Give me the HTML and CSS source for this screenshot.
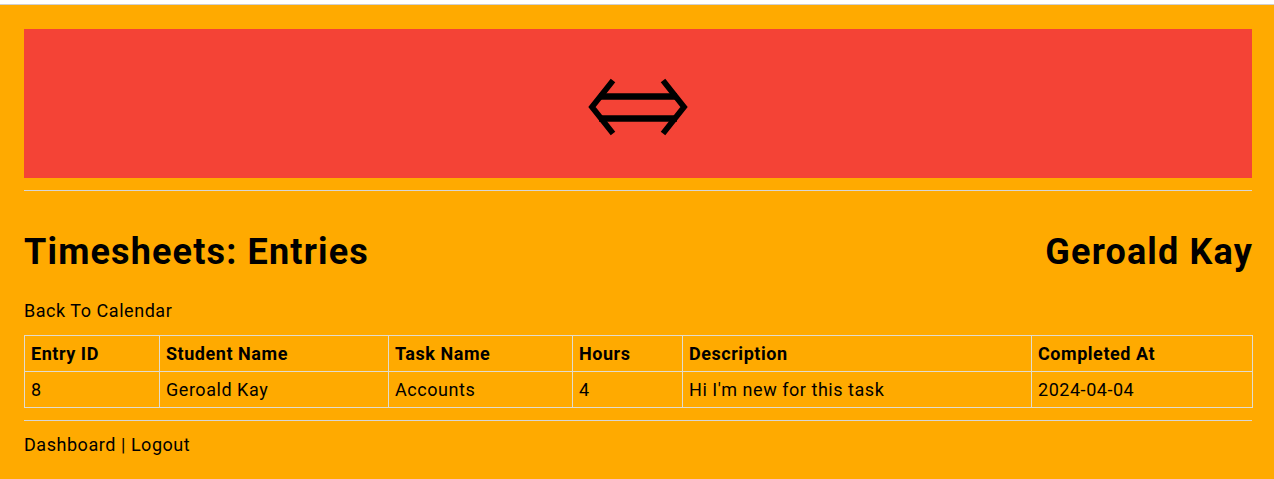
FILE: index.html
```html
<!DOCTYPE html>
<html lang="en">
<head>
<meta charset="utf-8">
<title>Timesheets: Entries</title>
<link rel="stylesheet" href="styles.css">
</head>
<body>
<div class="page">
  <div class="banner">
    <svg class="logo" width="108" height="62" viewBox="0 0 108 62" aria-hidden="true">
      <g fill="none" stroke="#000">
        <line x1="15" y1="20.5" x2="93" y2="20.5" stroke-width="6.5"/>
        <line x1="15" y1="42.5" x2="93" y2="42.5" stroke-width="6.5"/>
        <polyline points="29,4.5 8,31 29,57.5" stroke-width="5.8" stroke-linejoin="miter"/>
        <polyline points="79,4.5 100,31 79,57.5" stroke-width="5.8" stroke-linejoin="miter"/>
      </g>
    </svg>
  </div>
  <hr class="rule rule-top">
  <div class="title-row">
    <h1 class="title">Timesheets: Entries</h1>
    <h1 class="title">Geroald Kay</h1>
  </div>
  <p class="back"><a href="#">Back To Calendar</a></p>
  <table class="entries">
    <colgroup>
      <col class="c1"><col class="c2"><col class="c3"><col class="c4"><col class="c5"><col class="c6">
    </colgroup>
    <thead>
      <tr><th>Entry ID</th><th>Student Name</th><th>Task Name</th><th>Hours</th><th>Description</th><th>Completed At</th></tr>
    </thead>
    <tbody>
      <tr><td>8</td><td>Geroald Kay</td><td>Accounts</td><td>4</td><td>Hi I'm new for this task</td><td>2024-04-04</td></tr>
    </tbody>
  </table>
  <hr class="rule rule-bottom">
  <p class="footer"><a href="#">Dashboard</a> | <a href="#">Logout</a></p>
</div>
</body>
</html>
```
FILE: styles.css
```css
html {
  background: #ffffff;
}
body {
  margin: 4px 0 0;
  border-top: 1px solid #cfcfcf;
  background: #ffaa00;
  min-height: calc(100vh - 5px);
  font-family: Roboto, "Liberation Sans", sans-serif;
  font-size: 18px;
  letter-spacing: 0.03em;
  color: #000;
}
.page {
  padding: 24px 22px 0 24px;
}
.banner {
  height: 149px;
  background: #f44336;
  display: flex;
  align-items: center;
  justify-content: center;
  padding-top: 7px;
  box-sizing: border-box;
}
.logo {
  display: block;
}
.rule {
  border: 0;
  border-top: 1px solid #d6d6d6;
  height: 0;
  margin: 0;
}
.rule-top {
  margin-top: 12px;
}
.title-row {
  display: flex;
  justify-content: space-between;
  align-items: baseline;
  margin-top: 40px;
}
.title {
  margin: 0;
  font-size: 36px;
  font-weight: 700;
  line-height: normal;
  letter-spacing: 0.032em;
}
.title:last-child {
  margin-right: -1px;
}
.back {
  margin: 27px 0 0;
  line-height: normal;
}
a {
  color: #000;
  text-decoration: none;
}
.entries {
  margin-top: 14px;
  width: 1228px;
  border-collapse: collapse;
  table-layout: fixed;
}
.entries th,
.entries td {
  border: 1px solid #e2dccd;
  padding: 7px 6px;
  text-align: left;
  line-height: normal;
  font-size: 18px;
}
.entries th {
  font-weight: 700;
}
.c1 { width: 135px; }
.c2 { width: 229px; }
.c3 { width: 184px; }
.c4 { width: 110px; }
.c5 { width: 349px; }
.c6 { width: 221px; }
.rule-bottom {
  margin-top: 12px;
}
.footer {
  margin: 13px 0 0;
  padding-bottom: 23px;
  line-height: normal;
}
```
